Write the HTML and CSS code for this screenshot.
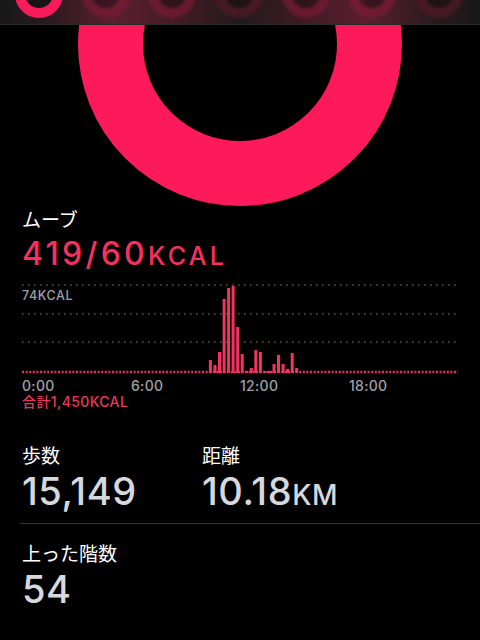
FILE: index.html
```html
<html>
<head><title>アクティビティ</title>
<meta name="viewport" content="width=device-width, initial-scale=1.0" />
<meta content="text/html;charset=utf-8" http-equiv="Content-Type" />
<link rel="stylesheet" href="styles.css">
</head>
<body>

<div class="strip">
	<div class="mini on"></div>
	<div class="mini"></div>
	<div class="mini"></div>
	<div class="mini dim"></div>
	<div class="mini"></div>
	<div class="mini"></div>
	<div class="mini dim"></div>
</div>

<div class="ringbox">
	<div class="ring"></div>
</div>

<div class="move">
	<div class="label">ムーブ</div>
	<div class="movevalue">419/60<span class="unit">KCAL</span></div>
</div>

<div class="chart">
	<span class="chartmax">74KCAL</span>
	<svg width="436" height="96" viewBox="0 0 436 96">
		<line x1="0" y1="5" x2="436" y2="5" class="grid" />
		<line x1="0" y1="34" x2="436" y2="34" class="grid" />
		<line x1="0" y1="62" x2="436" y2="62" class="grid" />
		<line x1="0" y1="92" x2="436" y2="92" class="base" />
		<g class="bars">
			<rect x="186.9" y="80" width="3" height="13" />
			<rect x="191.5" y="85" width="3" height="8" />
			<rect x="196.0" y="72" width="3" height="21" />
			<rect x="200.6" y="19" width="3" height="74" />
			<rect x="205.1" y="8" width="3" height="85" />
			<rect x="209.6" y="6" width="3" height="87" />
			<rect x="214.2" y="47" width="3" height="46" />
			<rect x="218.7" y="74" width="3" height="19" />
			<rect x="223.3" y="91" width="3" height="2" />
			<rect x="227.8" y="88" width="3" height="5" />
			<rect x="232.3" y="70" width="3" height="23" />
			<rect x="236.9" y="72" width="3" height="21" />
			<rect x="241.4" y="91" width="3" height="2" />
			<rect x="246.0" y="91" width="3" height="2" />
			<rect x="250.5" y="84" width="3" height="9" />
			<rect x="255.0" y="75" width="3" height="18" />
			<rect x="259.6" y="84" width="3" height="9" />
			<rect x="264.1" y="89" width="3" height="4" />
			<rect x="268.7" y="73" width="3" height="20" />
			<rect x="273.2" y="88" width="3" height="5" />
		</g>
	</svg>
	<div class="times">
		<span>0:00</span>
		<span>6:00</span>
		<span>12:00</span>
		<span>18:00</span>
	</div>
	<div class="total">合計1,450KCAL</div>
</div>

<div class="stats">
	<div>
		<div class="label">歩数</div>
		<div class="value">15,149</div>
	</div>
	<div>
		<div class="label">距離</div>
		<div class="value">10.18<span class="unit">KM</span></div>
	</div>
</div>

<div class="sep"></div>

<div class="stats single">
	<div>
		<div class="label">上った階数</div>
		<div class="value">54</div>
	</div>
</div>

</body>
</html>
```

FILE: styles.css
```css
body{
	padding:0;
	margin:0;
	background-color:#000;
	width:480px;
	height:640px;
	overflow:hidden;
	color:white;
	font-family: Inter, "Noto Sans CJK JP", sans-serif;
}

/* top strip with the small rings */
.strip{
	height:25px;
	display:flex;
	gap:18.7px;
	padding-left:15px;
	overflow:hidden;
	border-bottom:1px solid #2a2a2c;
	box-sizing:border-box;
	background: linear-gradient(to right, #181818 0%, #2a1a1f 10%, #5c1e31 24%, #3c1a24 40%, #231a1d 50%, #3c1a24 62%, #5c1e31 76%, #2a1a1f 90%, #181818 100%);
}

.mini{
	flex:none;
	width:48px;
	height:48px;
	margin-top:-30px;
	border-radius:50%;
	border:10px solid rgba(220,40,85,0.35);
	box-sizing:border-box;
	background:rgba(20,10,14,0.45);
	filter:blur(1.5px);
}

.mini.dim{
	border-color:rgba(160,40,70,0.3);
}

.mini.on{
	border-color:#fa1c5a;
	background:#151515;
	filter:none;
}

/* big move ring */
.ringbox{
	height:182px;
	overflow:hidden;
}

.ring{
	width:324px;
	height:324px;
	margin:-143px auto 0;
	border-radius:50%;
	border:65px solid #fd1a5b;
	box-sizing:border-box;
}

.label{
	font-size:19px;
	line-height:22px;
	color:#fff;
}

.move{
	padding:3px 0 0 22px;
}

.movevalue{
	color:#f7305f;
	font-size:32px;
	font-weight:500;
	line-height:34px;
	margin-top:5px;
	letter-spacing:3.3px;
}

.movevalue .unit{
	font-size:25px;
}

/* hourly chart */
.chart{
	position:relative;
	margin:7px 0 0 22px;
	width:436px;
}

.chart svg{
	display:block;
}

.grid{
	stroke:#5a5a5c;
	stroke-width:1.5;
	stroke-dasharray:1.5 4.5;
}

.base{
	stroke:#e0345e;
	stroke-width:2.5;
	stroke-dasharray:2 1.6;
}

.bars rect{
	fill:#f2325f;
}

.chartmax{
	position:absolute;
	left:0;
	top:8px;
	font-size:12.5px;
	font-weight:500;
	letter-spacing:0.6px;
	color:#a0a0a4;
}

.times{
	display:grid;
	grid-template-columns:109px 109px 109px 109px;
	font-size:14px;
	line-height:16px;
	font-weight:500;
	letter-spacing:0.3px;
	color:#a0a0a4;
	margin-top:2px;
}

.total{
	color:#e8385f;
	font-size:14px;
	line-height:16px;
	font-weight:500;
	letter-spacing:0.4px;
	margin-top:0;
}

/* steps, distance, floors */
.stats{
	display:grid;
	grid-template-columns:180px 1fr;
	padding-left:22px;
	margin-top:36px;
}

.stats.single{
	margin-top:20px;
}

.value{
	font-size:38px;
	font-weight:500;
	line-height:40px;
	color:#d6d8de;
	margin-top:3px;
	letter-spacing:0.6px;
}

.value .unit{
	font-size:28px;
}

.sep{
	margin:8px 0 0 20px;
	border-top:1.5px solid #333335;
}
```
